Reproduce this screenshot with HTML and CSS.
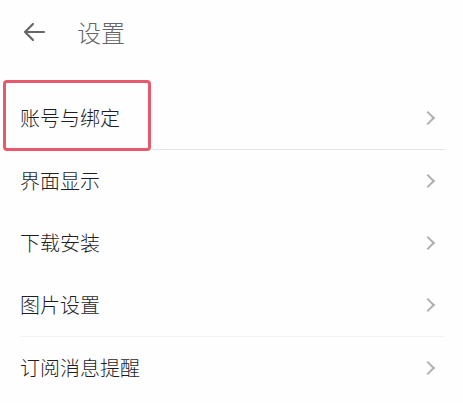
FILE: index.html
```html
<!DOCTYPE html>
<html lang="zh">
<head>
<meta charset="utf-8">
<link rel="stylesheet" href="styles.css">
</head>
<body>
<div class="page">
  <header class="bar">
    <svg class="back" width="24" height="20" viewBox="0 0 24 20"><path d="M22 10H3M11 2L3 10l8 8" fill="none" stroke="#666" stroke-width="2.2" stroke-linecap="round" stroke-linejoin="round"/></svg>
    <span class="title">设置</span>
  </header>
  <ul class="list">
    <li class="row sep"><span>账号与绑定</span><i class="chev"></i></li>
    <li class="row"><span>界面显示</span><i class="chev"></i></li>
    <li class="row"><span>下载安装</span><i class="chev"></i></li>
    <li class="row sep2"><span>图片设置</span><i class="chev"></i></li>
    <li class="row"><span>订阅消息提醒</span><i class="chev"></i></li>
  </ul>
  <div class="highlight"></div>
</div>
</body>
</html>
```

FILE: styles.css
```css
html, body { margin: 0; padding: 0; background: #fefefe; }
body { font-family: "Noto Sans CJK SC", "Noto Sans", sans-serif; }
.page { position: relative; width: 463px; height: 403px; overflow: hidden; }
.bar { height: 63px; display: flex; align-items: center; padding-left: 22px; }
.title { margin-left: 31px; font-size: 24px; color: #666; line-height: 1; font-weight: 300; }
.list { list-style: none; margin: 23px 0 0; padding: 0 18px 0 20px; }
.row { height: 62px; display: flex; align-items: center; justify-content: space-between; font-size: 20px; color: #1e1e1e; font-weight: 300; }
.row span { line-height: 1; }
.sep { border-bottom: 1px solid #e6e6e6; height: 63px; }
.sep2 { border-bottom: 1px solid #f2f2f2; }
.chev { width: 8px; height: 8px; border-right: 2px solid #b0b0b0; border-top: 2px solid #b0b0b0; transform: rotate(45deg); margin-right: 12px; }
.highlight { position: absolute; left: 3px; top: 80px; width: 142px; height: 65px; border: 3px solid #e8596e; border-radius: 4px; }
```
